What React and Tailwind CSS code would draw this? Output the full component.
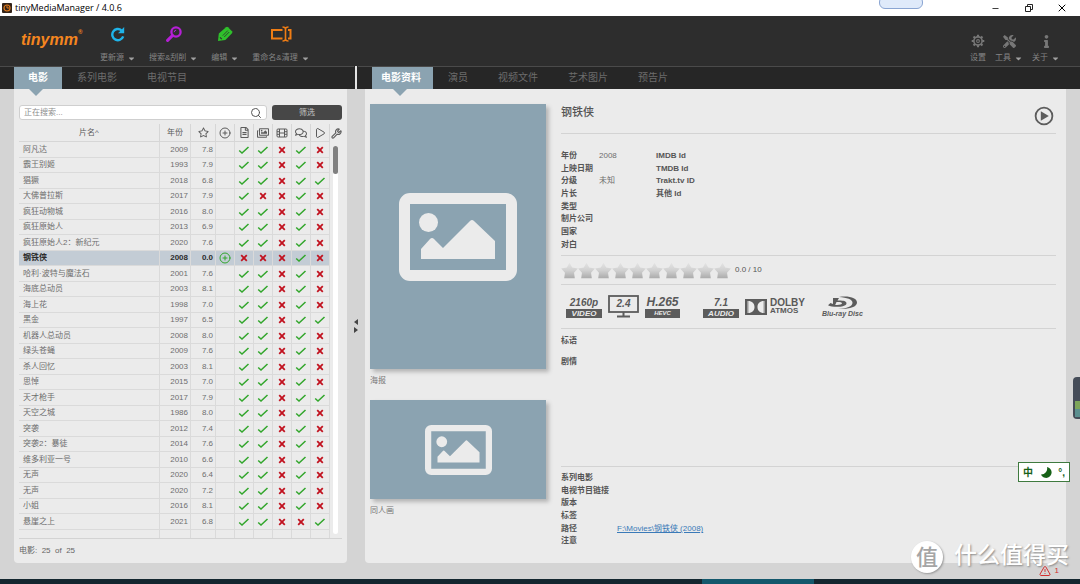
import React, { useState } from "react";
import clsx from "clsx";
import {
  FaRegStar,
  FaRegFileAlt,
  FaRegImages,
  FaRegComments,
  FaTools,
  FaInfo,
  FaCaretDown,
} from "react-icons/fa";
import { CirclePlus, Play, Wrench, Search, TriangleAlert, Minus, X } from "lucide-react";

// flags: nfo, images, video, subtitles, trailer
const movies = [
  { title: "阿凡达", year: 2009, rating: "7.8", flags: "11010" },
  { title: "霸王别姬", year: 1993, rating: "7.9", flags: "11010" },
  { title: "猖獗", year: 2018, rating: "6.8", flags: "11011" },
  { title: "大佛普拉斯", year: 2017, rating: "7.9", flags: "10010" },
  { title: "疯狂动物城", year: 2016, rating: "8.0", flags: "11010" },
  { title: "疯狂原始人", year: 2013, rating: "6.9", flags: "11010" },
  { title: "疯狂原始人2：新纪元", year: 2020, rating: "7.6", flags: "11010" },
  { title: "钢铁侠", year: 2008, rating: "0.0", flags: "00010", isNew: true },
  { title: "哈利·波特与魔法石", year: 2001, rating: "7.6", flags: "11010" },
  { title: "海底总动员", year: 2003, rating: "8.1", flags: "11010" },
  { title: "海上花", year: 1998, rating: "7.0", flags: "11010" },
  { title: "黑金", year: 1997, rating: "6.5", flags: "11011" },
  { title: "机器人总动员", year: 2008, rating: "8.0", flags: "11010" },
  { title: "绿头苍蝇", year: 2009, rating: "7.6", flags: "11010" },
  { title: "杀人回忆", year: 2003, rating: "8.1", flags: "11010" },
  { title: "思悼", year: 2015, rating: "7.0", flags: "11010" },
  { title: "天才枪手", year: 2017, rating: "7.9", flags: "11011" },
  { title: "天空之城", year: 1986, rating: "8.0", flags: "11010" },
  { title: "突袭", year: 2012, rating: "7.4", flags: "11010" },
  { title: "突袭2：暴徒", year: 2014, rating: "7.6", flags: "11010" },
  { title: "维多利亚一号", year: 2010, rating: "6.6", flags: "11010" },
  { title: "无声", year: 2020, rating: "6.4", flags: "11010" },
  { title: "无声", year: 2020, rating: "7.2", flags: "11010" },
  { title: "小姐", year: 2016, rating: "8.1", flags: "11010" },
  { title: "悬崖之上", year: 2021, rating: "6.8", flags: "11001" },
];

const RefreshIcon = () => (
  <svg viewBox="0 0 16 16" className="h-4 w-4" fill="none">
    <path d="M13.2 10.4A5.6 5.6 0 1 1 11.4 4.2" stroke="#1fb4ea" strokeWidth="2.4" />
    <path d="M14.2 1v6.2H8z" fill="#1fb4ea" />
  </svg>
);

const ScrapeIcon = () => (
  <svg viewBox="0 0 16 16" className="h-4 w-4" fill="none" stroke="#b51fd6">
    <circle cx="10" cy="6" r="4.6" strokeWidth="2.3" />
    <path d="M6.4 9.6L1.6 14.4" strokeWidth="3" strokeLinecap="round" />
    <path d="M8.2 6.2a2 2 0 0 1 2-2" strokeWidth="1" />
  </svg>
);

const EditIcon = () => (
  <svg viewBox="0 0 16 16" className="h-4 w-4">
    <path d="M1 15l.8-7.4L9 1.200q1-.8 2 0L15 5.200q.8 1 0 2L8.400 14z" fill="#2fc02b" />
    <path d="M5.800 9.600l5-5M7.200 11l5-5" stroke="#2d2d2d" strokeWidth="0.800" />
    <path d="M3 11.400l1.800 1.800" stroke="#2d2d2d" strokeWidth="1.200" />
  </svg>
);

const RenameIcon = () => (
  <svg viewBox="0 0 22 16" className="h-4 w-[22px]" fill="none" stroke="#f07d14" strokeWidth="2">
    <path d="M12.500 4H2v8.500h10.500" />
    <path d="M18 4h2.500v8.500H18" />
    <path d="M12.500 1c2 0 3 .6 3 2v10c0 1.400-1 2-3 2M18.500 1c-2 0-3 .6-3 2M15.500 13c0 1.400 1 2 3 2" strokeWidth="1.600" />
  </svg>
);

const GearIcon = () => (
  <svg viewBox="0 0 16 16" className="h-[14px] w-[14px]" fill="none" stroke="currentColor">
    <circle cx="8" cy="8" r="4.700" strokeWidth="1.800" />
    <circle cx="8" cy="8" r="1.600" strokeWidth="1.200" />
    <path
      d="M8 .8v2.400M8 12.800v2.400M.8 8h2.400M12.800 8h2.400M2.900 2.900l1.700 1.700M11.400 11.400l1.700 1.700M2.900 13.100l1.700-1.700M11.400 4.600l1.700-1.700"
      strokeWidth="2.400"
    />
  </svg>
);

const FilmIcon = () => (
  <svg viewBox="0 0 12 10" className="h-[10px] w-3" fill="none" stroke="currentColor" strokeWidth="1">
    <rect x="1" y="1" width="10" height="8" rx="1" />
    <path d="M3.500 1v8M8.500 1v8M3.500 5h5M1 3.700h2.500M1 6.300h2.500M8.500 3.700H11M8.500 6.300H11" />
  </svg>
);

const Yes = () => (
  <svg viewBox="0 0 12 8" className="mx-auto h-2 w-3" fill="none" role="img" aria-label="yes">
    <path d="M1.200 4.500L4 7l6.500-6" stroke="#32a62c" strokeWidth="1.500" />
  </svg>
);

const No = () => (
  <svg viewBox="0 0 8 8" className="mx-auto h-2 w-2" fill="none" role="img" aria-label="no">
    <path d="M1.200 1.200l5.600 5.600M6.800 1.200L1.200 6.800" stroke="#c1121f" strokeWidth="1.800" />
  </svg>
);

const PictureIcon = ({ className }) => (
  <svg viewBox="0 0 118 88" className={className} fill="#ebebeb">
    <path
      fillRule="evenodd"
      d="M11 0h96a11 11 0 0 1 11 11v66a11 11 0 0 1-11 11H11A11 11 0 0 1 0 77V11A11 11 0 0 1 11 0zM11 11v66h96V11z"
    />
    <circle cx="29.500" cy="29.500" r="9.500" />
    <path d="M22 66V56l9-10q2-2 4 0l9 9 27-27q2-2 4 0l21 20v18z" />
  </svg>
);

const ToolButton = ({ icon, label, menu = true }) => (
  <button className="flex flex-col items-center">
    <span className="flex h-5 items-center justify-center">{icon}</span>
    <span className="mt-2 flex items-center gap-[3px] text-[8px] leading-3 text-[#858585]">
      {label}
      {menu && <FaCaretDown size={9} className="text-[#a0a0a0]" />}
    </span>
  </button>
);

const Tabs = ({ items, active, onChange, activeClass }) => (
  <div role="tablist" className="flex h-[23px] border-t border-[#4a4a4a] bg-[#262626] pl-[14px]">
    {items.map((item) => (
      <button
        key={item}
        role="tab"
        aria-selected={item === active}
        onClick={() => onChange(item)}
        className={clsx(
          "relative text-[10px] leading-5",
          item === active ? "bg-[#8ba3b1] font-bold text-white" : "px-[15px] text-[#6c6c6c]",
          item === active && activeClass
        )}
      >
        {item}
        {item === active && (
          <svg viewBox="0 0 14 7" className="absolute top-full left-[46%] z-10 h-[7px] w-[14px] -translate-x-1/2">
            <path d="M0 0h14L7 7z" fill="#8ba3b1" />
          </svg>
        )}
      </button>
    ))}
  </div>
);

const headCell = "h-[18px] border-r border-b border-[#d6d6d6] p-0 font-normal";
const cell = "border-r border-b border-[#dadada] p-0";

const MovieTable = ({ selected, onSelect }) => (
  <table className="w-full table-fixed border-separate border-spacing-0 text-[8px] leading-3 text-[#6e6e6e]">
    <colgroup>
      <col />
      <col className="w-[31px]" />
      <col className="w-[25px]" />
      <col className="w-[19px]" />
      <col className="w-[19px]" />
      <col className="w-[19px]" />
      <col className="w-[19px]" />
      <col className="w-[19px]" />
      <col className="w-[19px]" />
      <col className="w-3" />
    </colgroup>
    <thead>
      <tr className="text-[#5c5c5c]">
        <th className={headCell}>片名^</th>
        <th className={headCell}>年份</th>
        <th className={headCell} aria-label="评分"><FaRegStar size={11} className="mx-auto" /></th>
        <th className={headCell} aria-label="新"><CirclePlus size={12} className="mx-auto" /></th>
        <th className={headCell} aria-label="NFO"><FaRegFileAlt size={11} className="mx-auto" /></th>
        <th className={headCell} aria-label="图片"><FaRegImages size={12} className="mx-auto" /></th>
        <th className={headCell} aria-label="视频"><span className="flex justify-center"><FilmIcon /></span></th>
        <th className={headCell} aria-label="字幕"><FaRegComments size={12} className="mx-auto" /></th>
        <th className={headCell} aria-label="预告片"><Play size={12} className="mx-auto" /></th>
        <th className="p-0" aria-label="列"><Wrench size={11} strokeWidth={2.5} className="ml-px" /></th>
      </tr>
    </thead>
    <tbody>
      {movies.map((movie, index) => {
        const active = index === selected;
        const tdClass = clsx(cell, active && "bg-[#c3ccd5]");
        return (
          <tr
            key={index}
            onClick={() => onSelect(index)}
            className={clsx("cursor-default odd:h-4 even:h-[15px]", active && "font-bold text-[#2b2b2b]")}
          >
            <td className={clsx(tdClass, "truncate pl-1")}>{movie.title}</td>
            <td className={clsx(tdClass, "pr-[2px] text-right")}>{movie.year}</td>
            <td className={clsx(tdClass, "pr-[2px] text-right")}>{movie.rating}</td>
            <td className={tdClass}>
              {movie.isNew && <CirclePlus size={12} className="mx-auto text-[#32a62c]" />}
            </td>
            {movie.flags.split("").map((flag, i) => (
              <td key={i} className={tdClass}>{flag === "1" ? <Yes /> : <No />}</td>
            ))}
            <td className="p-0" />
          </tr>
        );
      })}
      <tr className="h-2">
        {Array.from({ length: 9 }, (_, i) => (
          <td key={i} className="border-r border-[#dadada] p-0" />
        ))}
        <td className="p-0" />
      </tr>
    </tbody>
  </table>
);

const Star = () => (
  <svg viewBox="0 0 24 24" className="h-[17px] w-[17px]">
    <defs>
      <linearGradient id="star" x1="0" y1="0" x2="0" y2="1">
        <stop offset="0" stopColor="#e4e4e4" />
        <stop offset="0.5" stopColor="#d0d0d0" />
        <stop offset="1" stopColor="#ababab" />
      </linearGradient>
    </defs>
    <path d="M12 1l3.800 6.800 8 1.400-5.400 6 1.100 7.800h-15l1.100-7.800-5.400-6 8-1.400z" fill="url(#star)" />
  </svg>
);

const Badge = ({ value, label }) => (
  <div className="flex w-9 flex-col items-center font-bold italic">
    <span className="text-[10px] leading-[13px] text-[#595959]">{value}</span>
    <span className="w-full bg-[#5c5c5c] text-center text-[8px] leading-[9px] text-[#ebebeb]">{label}</span>
  </div>
);

const MediaInfo = () => (
  <div className="flex h-11 items-center border-b border-[#d3d3d3] pl-[5px] text-[#595959]">
    <Badge value="2160p" label="VIDEO" />
    <div className="relative ml-[6px]">
      <svg viewBox="0 0 31 23" className="h-[23px] w-[31px]" fill="none" stroke="#5c5c5c">
        <rect x="1" y="1" width="29" height="16" strokeWidth="1.800" />
        <path d="M15.500 17v4M9 21.500h13" strokeWidth="2" />
      </svg>
      <span className="absolute inset-x-0 top-[3px] text-center text-[10px] leading-3 font-bold italic">2.4</span>
    </div>
    <div className="ml-[6px] flex w-[35px] flex-col items-center font-bold italic">
      <span className="text-[12px] leading-[13px]">H.265</span>
      <span className="w-full bg-[#5c5c5c] text-center text-[6px] leading-[9px] text-[#ebebeb]">HEVC</span>
    </div>
    <div className="ml-[23px]">
      <Badge value="7.1" label="AUDIO" />
    </div>
    <div className="ml-[6px] flex items-center gap-[3px]">
      <svg viewBox="0 0 22 16" className="h-4 w-[22px]">
        <path d="M0 0h22v16H0z" fill="#5c5c5c" />
        <path d="M2 2h2.500C8.500 3 9.500 5.500 9.500 8s-1 5-5 6H2zM20 2h-2.500c-4 1-5 3.500-5 6s1 5 5 6H20z" fill="#ebebeb" />
        <path d="M2 2h1.500v12H2zM18.500 2H20v12h-1.500z" fill="#9a9a9a" />
      </svg>
      <div className="flex flex-col">
        <span className="text-[10px] leading-[9px] font-bold">DOLBY</span>
        <span className="text-[8px] leading-2 font-bold">ATMOS</span>
      </div>
    </div>
    <div className="ml-[17px] flex flex-col items-center">
      <svg viewBox="0 0 32 14" className="h-[14px] w-8" fill="#5c5c5c">
        <path d="M13 1c11-1.500 18 1.500 18 5.500 0 4.500-8 7-19 6.500 9-.4 14.500-2.800 14.500-6.300C26.500 3.500 21 1.500 13 1z" />
        <path
          fillRule="evenodd"
          d="M7 2h6l-1.500 2.600c5-.2 9 .4 9 2.600 0 2.600-5 3.600-9.500 3.600-4 0-7-.6-9-1.600L4.500 7 7 8zM10.500 6L9.200 8.900c3.300.5 6.800-.3 6.800-1.600 0-1.200-2.800-1.500-5.500-1.300z"
        />
      </svg>
      <span className="text-[7px] leading-[7px] font-bold italic">Blu-ray Disc</span>
    </div>
  </div>
);

const fields = [
  ["年份", "2008", "IMDB Id"],
  ["上映日期", "", "TMDB Id"],
  ["分级", "未知", "Trakt.tv ID"],
  ["片长", "", "其他 Id"],
  ["类型", "", ""],
  ["制片公司", "", ""],
  ["国家", "", ""],
  ["对白", "", ""],
];

const MovieDetails = () => (
  <div className="flex flex-1 rounded-b bg-[#ebebeb] pr-[10px] pl-[5px]">
    <div className="w-44 shrink-0 pt-[15px] text-[8px] leading-3 text-[#777]">
      <div className="flex h-[265px] items-center justify-center bg-[#8ba3b1] shadow-[3px_3px_4px_#b5b5b5]">
        <PictureIcon className="h-[88px] w-[118px]" />
      </div>
      <p className="pt-[6px] pb-[13px]">海报</p>
      <div className="flex h-[99px] items-center justify-center bg-[#8ba3b1] shadow-[3px_3px_4px_#b5b5b5]">
        <PictureIcon className="h-[50px] w-[67px]" />
      </div>
      <p className="pt-[6px]">同人画</p>
    </div>

    <div className="ml-[15px] flex flex-1 flex-col text-[8px] text-[#555]">
      <div className="flex h-[45px] items-start justify-between border-b border-[#d3d3d3] pt-4 pr-[2px]">
        <h1 className="text-[11px] leading-[14px] font-medium text-[#555]">钢铁侠</h1>
        <button aria-label="播放" className="pt-[1px]">
          <svg viewBox="0 0 20 20" className="h-5 w-5">
            <circle cx="10" cy="10" r="8.400" fill="none" stroke="#5c5c5c" strokeWidth="1.800" />
            <path d="M6.800 5.200v9.600l8-4.800z" fill="#5c5c5c" />
          </svg>
        </button>
      </div>

      <dl className="grid auto-rows-[13px_12px_13px] grid-cols-[38px_57px_1fr] border-b border-[#d3d3d3] pt-[15px] pb-[5px] leading-[13px]">
        {fields.map(([name, value, id]) => (
          <React.Fragment key={name}>
            <dt className="font-bold whitespace-nowrap">{name}</dt>
            <dd className="text-[#6e6e6e]">{value}</dd>
            <dd className="font-bold">{id}</dd>
          </React.Fragment>
        ))}
      </dl>

      <div className="flex h-[29px] items-center border-b border-[#d3d3d3]">
        {Array.from({ length: 10 }, (_, i) => (
          <Star key={i} />
        ))}
        <span className="ml-1">0.0 / 10</span>
      </div>

      <MediaInfo />

      <div className="flex flex-1 flex-col gap-2 pt-[5px] leading-[13px] font-bold">
        <p>标语</p>
        <p>剧情</p>
      </div>

      <dl className="grid h-[97px] auto-rows-[13px_12px_13px] grid-cols-[56px_1fr] border-t border-[#d3d3d3] pt-1 leading-[13px]">
        {["系列电影", "电视节目链接", "版本", "标签", "路径", "注意"].map((name) => (
          <React.Fragment key={name}>
            <dt className="font-bold whitespace-nowrap">{name}</dt>
            <dd>
              {name === "路径" && (
                <a href="#path" className="text-[#3a7ab8] underline">F:\Movies\钢铁侠 (2008)</a>
              )}
            </dd>
          </React.Fragment>
        ))}
      </dl>
    </div>
  </div>
);

const App = () => {
  const [moduleTab, setModuleTab] = useState("电影");
  const [detailTab, setDetailTab] = useState("电影资料");
  const [selected, setSelected] = useState(7);

  return (
    <div className="relative flex min-h-screen flex-col overflow-hidden bg-[#d4d4d4] font-['Liberation_Sans','Noto_Sans_CJK_SC',sans-serif]">
      <div className="flex h-4 items-center bg-white pr-[2px] pl-[2px]">
        <svg viewBox="0 0 10 10" className="h-[10px] w-[10px]">
          <rect width="10" height="10" rx="1" fill="#33241a" />
          <circle cx="5" cy="5" r="3" fill="none" stroke="#e07a1c" strokeWidth="1.200" />
          <path d="M5 2.500V5h2" fill="none" stroke="#e07a1c" />
        </svg>
        <span className="ml-[3px] flex-1 font-['Open_Sans',sans-serif] text-[9px] leading-4 text-black">
          tinyMediaManager / 4.0.6
        </span>
        <button aria-label="最小化" className="flex w-[33px] justify-center"><Minus size={9} strokeWidth={2} /></button>
        <button aria-label="还原" className="flex w-[33px] justify-center">
          <svg viewBox="0 0 8 8" className="h-2 w-2" fill="none" stroke="#222" strokeWidth="1">
            <path d="M.5 2.500h5v5h-5zM2.500 2.500v-2h5v5h-2" />
          </svg>
        </button>
        <button aria-label="关闭" className="flex w-[33px] justify-center"><X size={12} strokeWidth={2} /></button>
      </div>
      <div className="absolute -top-1 left-[879px] h-[13px] w-11 rounded-md border border-[#8aa5d2] bg-[#dfeafa]" />

      <header className="flex h-[50px] items-start bg-[#2d2d2d] pr-5">
        <div className="flex w-[100px] pt-3 pl-[21px] font-bold text-[#f5861f] italic">
          <span className="text-[16px] leading-6">tinymm</span>
          <span className="text-[6px] leading-2">®</span>
        </div>
        <div className="flex flex-1 gap-[13px] pt-2">
          <ToolButton icon={<RefreshIcon />} label="更新源" />
          <ToolButton icon={<ScrapeIcon />} label="搜索&刮削" />
          <ToolButton icon={<EditIcon />} label="编辑" />
          <ToolButton icon={<RenameIcon />} label="重命名&清理" />
        </div>
        <div className="flex gap-[9px] pt-2 text-[#777]">
          <ToolButton icon={<span className="pt-[14px]"><GearIcon /></span>} label="设置" menu={false} />
          <ToolButton icon={<FaTools size={13} className="mt-[14px]" />} label="工具" />
          <ToolButton icon={<FaInfo size={13} className="mt-[14px]" />} label="关于" />
        </div>
      </header>

      <main className="flex flex-1">
        <section className="flex w-[354px] shrink-0 flex-col">
          <Tabs
            items={["电影", "系列电影", "电视节目"]}
            active={moduleTab}
            onChange={setModuleTab}
            activeClass="px-[14px]"
          />
          <div className="mr-[7px] ml-[14px] flex flex-1 flex-col rounded-b bg-[#ebebeb] px-[5px] pt-4">
            <div className="mb-1 flex gap-[5px]">
              <label className="flex h-[15px] flex-1 items-center rounded-[3px] border border-[#cfcfcf] bg-white px-1">
                <input
                  type="text"
                  aria-label="搜索"
                  placeholder="正在搜索..."
                  className="min-w-0 flex-1 text-[8px] leading-3 outline-none placeholder:text-[#8d8d8d]"
                />
                <Search size={12} className="text-[#555]" />
              </label>
              <button className="h-[15px] w-[70px] rounded-[3px] bg-[#474747] text-[8px] leading-[15px] text-[#c4c4c4]">
                筛选
              </button>
            </div>
            <div className="relative">
              <MovieTable selected={selected} onSelect={setSelected} />
              <div className="absolute top-[22px] right-1 bottom-1 w-[5px] rounded-full bg-white">
                <div className="h-7 rounded-full bg-[#808080]" />
              </div>
            </div>
            <p className="flex flex-1 items-center border-t border-[#d3d3d3] text-[8px] leading-6 text-[#666]">
              电影:&nbsp; 25 &nbsp;of&nbsp; 25
            </p>
          </div>
        </section>

        <div className="flex w-1 shrink-0 flex-col items-center">
          <div className="h-[23px] w-full border-x border-[#262626] bg-[#e4e4e4]" />
          <svg viewBox="0 0 4 14" className="my-auto h-[14px] w-1" fill="#444">
            <path d="M4 0v6L0 3zM0 8v6l4-3z" />
          </svg>
        </div>

        <section className="flex min-w-0 flex-1 flex-col">
          <Tabs
            items={["电影资料", "演员", "视频文件", "艺术图片", "预告片"]}
            active={detailTab}
            onChange={setDetailTab}
            activeClass="pr-3 pl-[9px]"
          />
          <div className="flex flex-1 pr-[14px] pl-[7px]">
            <MovieDetails />
          </div>
        </section>
      </main>

      <footer>
        <div className="flex h-4 items-center justify-end gap-1 pr-[21px] text-[8px] leading-2 text-[#d32f2f]">
          <TriangleAlert size={12} />
          <span>1</span>
        </div>
        <div className="h-[5px] bg-[#14262f]">
          <div className="ml-[65%] h-full w-28 bg-[#14586c]" />
        </div>
      </footer>

      {/* performance widget docked to the screen edge */}
      <div className="absolute top-[377px] right-0 flex h-[42px] w-[7px] flex-col justify-end rounded-l bg-[#454c58] p-[2px] pr-0">
        <div className="h-2 bg-[#7ea65a]" />
        <div className="h-2 bg-[#5b8f8f]" />
      </div>

      {/* input method bar */}
      <div className="absolute top-[462px] right-[10px] flex h-5 w-[52px] items-center justify-between border border-[#3f7a3f] bg-white px-1 text-[#176117]">
        <span className="text-[10px] font-bold">中</span>
        <svg viewBox="0 0 12 12" className="h-3 w-3" fill="#176117">
          <path d="M7 1a5.500 5.500 0 1 1-6 7.500A6 6 0 0 0 7 1z" />
        </svg>
        <span className="text-[10px] font-bold">°,</span>
      </div>

      <div className="absolute right-[11px] bottom-[11px] flex items-center gap-[11px] text-white">
        <span className="flex h-8 w-8 items-center justify-center rounded-full bg-white text-[22px] font-medium text-[#a5a5a5] shadow-[1px_1px_2px_#999]">
          值
        </span>
        <span className="pb-1 text-[23px] leading-5 font-medium [text-shadow:1px_1px_2px_#888]">什么值得买</span>
      </div>
    </div>
  );
};

export default App;
